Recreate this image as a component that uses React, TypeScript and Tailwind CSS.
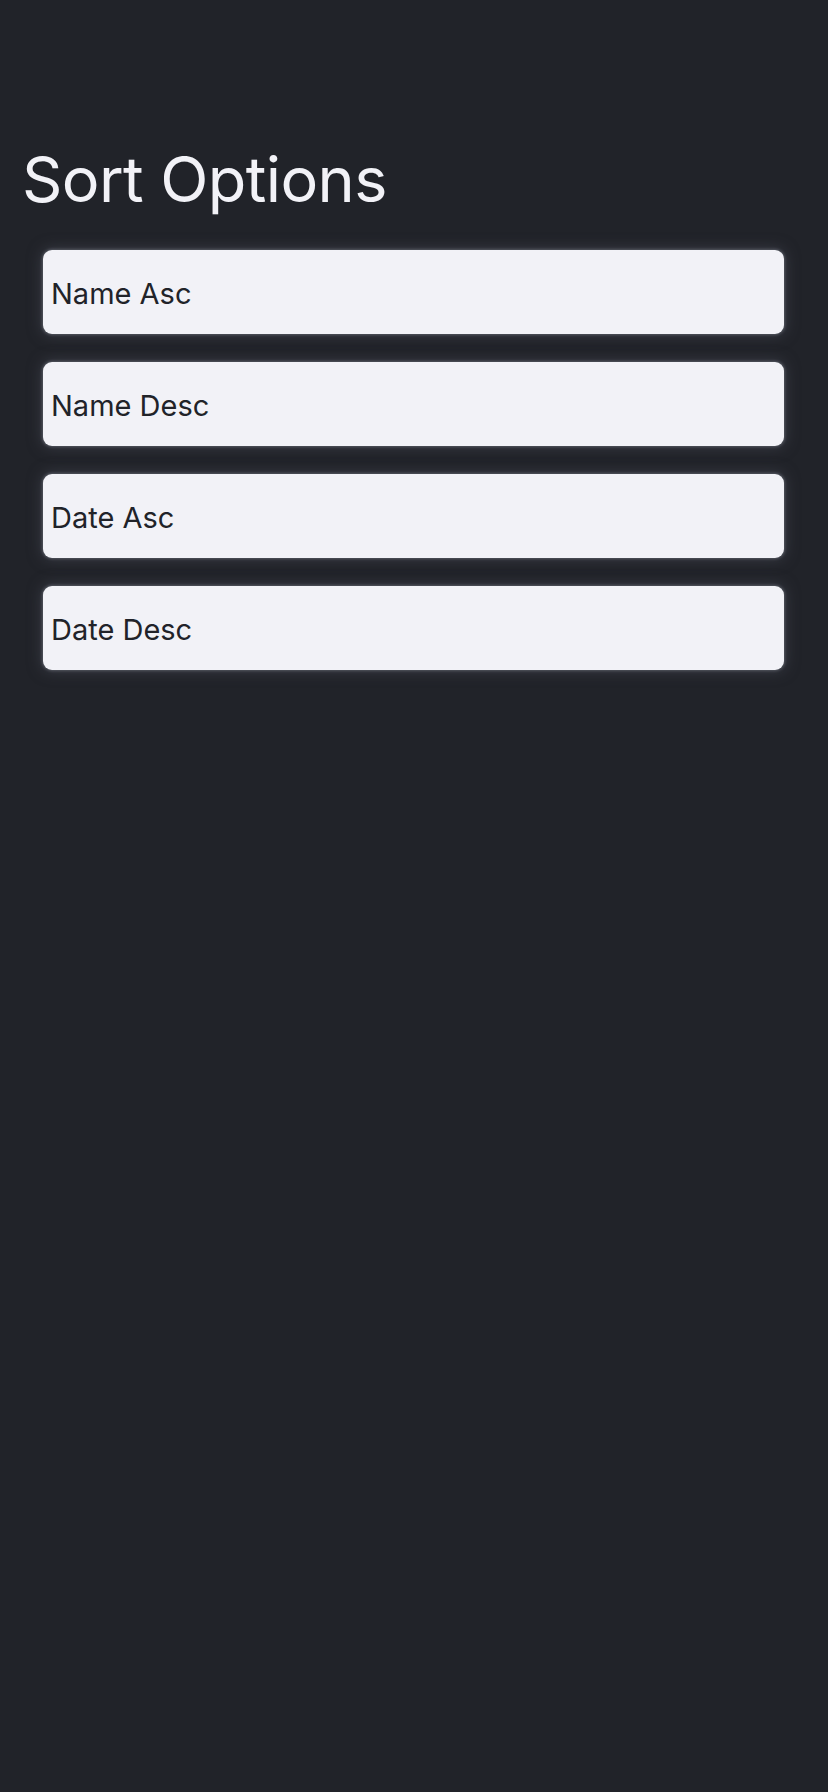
import React from "react";

const options = ["Name Asc", "Name Desc", "Date Asc", "Date Desc"];

export default function App() {
  return (
    <div
      className="min-h-[1792px] w-full bg-[#212329] pt-[139px]"
      style={{ fontFamily: "Inter, 'Noto Sans', sans-serif" }}
    >
      <h1 className="pl-[22px] text-[63px] leading-[80px] font-normal text-[#f2f2f7] tracking-[-0.6px]">
        Sort Options
      </h1>
      <div className="mt-[31px] flex flex-col gap-[28px] pl-[43px] pr-[44px]">
        {options.map((o) => (
          <div
            key={o}
            className="flex h-[84px] items-center rounded-[9px] bg-[#f2f2f7] pl-[8px] pt-[3px] shadow-[0_0_3px_1px_rgba(90,93,102,0.9),0_0_14px_2px_rgba(60,63,72,0.8)]"
          >
            <span className="text-[29px] text-[#212329]">{o}</span>
          </div>
        ))}
      </div>
    </div>
  );
}
